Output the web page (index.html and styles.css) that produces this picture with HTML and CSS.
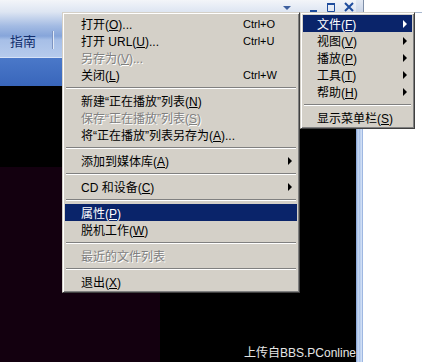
FILE: index.html
```html
<!DOCTYPE html>
<html lang="zh-CN">
<head>
    <meta charset="UTF-8">
    <title>Windows Media Player 菜单</title>
    <link rel="stylesheet" href="styles.css">
</head>
<body>

    <div class="app">
        <!-- Ventana del reproductor -->
        <div class="player">
            <div class="topbar">
                <div class="titlebar">
                    <span class="ctl ctl-drop">
                        <svg width="14" height="12" viewBox="0 0 14 12"><path d="M3 5h8l-4 4z" fill="#3d5f9e"/></svg>
                    </span>
                    <span class="ctl">
                        <svg width="14" height="12" viewBox="0 0 14 12"><rect x="4" y="9" width="7" height="2" fill="#1f4c9c"/></svg>
                    </span>
                    <span class="ctl">
                        <svg width="14" height="12" viewBox="0 0 14 12"><path d="M3.5 2.5h7v8h-7z" fill="none" stroke="#1f4c9c" stroke-width="1"/><rect x="3" y="2" width="8" height="2" fill="#1f4c9c"/></svg>
                    </span>
                    <span class="ctl">
                        <svg width="14" height="12" viewBox="0 0 14 12"><path d="M3 2l8 8M11 2l-8 8" stroke="#1f4c9c" stroke-width="2"/></svg>
                    </span>
                </div>
                <div class="tabs">
                    <span class="tab">指南</span>
                    <span class="tab-sep"></span>
                </div>
                <div class="topbar-lower"></div>
            </div>
            <div class="screen">
                <div class="visual"></div>
                <div class="watermark">上传自BBS.PConline</div>
            </div>
        </div>
        <div class="divider"></div>
        <div class="side">
            <div class="search"></div>
        </div>

        <!-- Menú principal -->
        <div class="menu main-menu">
            <div class="item"><span class="label">打开(<u>O</u>)...</span><span class="key">Ctrl+O</span></div>
            <div class="item"><span class="label">打开 URL(<u>U</u>)...</span><span class="key">Ctrl+U</span></div>
            <div class="item disabled"><span class="label">另存为(<u>V</u>)...</span></div>
            <div class="item"><span class="label">关闭(<u>L</u>)</span><span class="key">Ctrl+W</span></div>
            <div class="sep"></div>
            <div class="item"><span class="label">新建“正在播放”列表(<u>N</u>)</span></div>
            <div class="item disabled"><span class="label">保存“正在播放”列表(<u>S</u>)</span></div>
            <div class="item"><span class="label">将“正在播放”列表另存为(<u>A</u>)...</span></div>
            <div class="sep"></div>
            <div class="item"><span class="label">添加到媒体库(<u>A</u>)</span><span class="arrow"></span></div>
            <div class="sep"></div>
            <div class="item"><span class="label">CD 和设备(<u>C</u>)</span><span class="arrow"></span></div>
            <div class="sep"></div>
            <div class="item active"><span class="label">属性(<u>P</u>)</span></div>
            <div class="item"><span class="label">脱机工作(<u>W</u>)</span></div>
            <div class="sep"></div>
            <div class="item disabled"><span class="label">最近的文件列表</span></div>
            <div class="sep"></div>
            <div class="item"><span class="label">退出(<u>X</u>)</span></div>
        </div>

        <!-- Submenú -->
        <div class="menu sub-menu">
            <div class="item active"><span class="label">文件(<u>F</u>)</span><span class="arrow"></span></div>
            <div class="item"><span class="label">视图(<u>V</u>)</span><span class="arrow"></span></div>
            <div class="item"><span class="label">播放(<u>P</u>)</span><span class="arrow"></span></div>
            <div class="item"><span class="label">工具(<u>T</u>)</span><span class="arrow"></span></div>
            <div class="item"><span class="label">帮助(<u>H</u>)</span><span class="arrow"></span></div>
            <div class="sep"></div>
            <div class="item"><span class="label">显示菜单栏(<u>S</u>)</span></div>
        </div>
    </div>

</body>
</html>
```

FILE: styles.css
```css
/* Estilo general */
body {
    margin: 0;
    font-family: "Liberation Sans", "Noto Sans CJK SC", sans-serif;
    font-size: 12px;
    background-color: #000;
}

.app {
    position: relative;
    display: grid;
    grid-template-columns: 356px 7px 1fr;
    width: 422px;
    height: 362px;
    overflow: hidden;
}

.player {
    display: flex;
    flex-direction: column;
}

/* Barra superior azul */
.topbar {
    height: 86px;
    display: flex;
    flex-direction: column;
    background: linear-gradient(to bottom, #f3f5f9 0, #dde5f2 12px, #a3bbe3 26px, #86a5da 36px, #a7bfe7 40px, #b5caec 56px);
}

.titlebar {
    height: 14px;
    display: flex;
    justify-content: flex-end;
    align-items: center;
    gap: 4px;
}

.ctl {
    width: 14px;
    height: 12px;
    display: flex;
}

.ctl-drop {
    margin-right: 8px;
}

.tabs {
    height: 43px;
    display: flex;
    align-items: center;
    padding-top: 9px;
    box-sizing: border-box;
}

.tab {
    padding-left: 10px;
    font-size: 13px;
    color: #132e6c;
}

.tab-sep {
    width: 1px;
    height: 18px;
    margin-left: 16px;
    background-color: #7d94c2;
    box-shadow: 1px 0 #e2eaf6;
}

.topbar-lower {
    flex: 1;
    border-top: 1px solid #d6e2f7;
    background: linear-gradient(to bottom, #4a78c9, #3966bb);
}

/* Zona de video */
.screen {
    flex: 1;
    position: relative;
    display: grid;
    grid-template-rows: 81px 1fr;
    grid-template-columns: 160px 1fr;
    background-color: #000;
    overflow: hidden;
}

.visual {
    grid-row: 2;
    grid-column: 1;
    background-color: #13000f;
}

.watermark {
    position: absolute;
    left: 244px;
    bottom: 2px;
    white-space: nowrap;
    font-size: 12px;
    line-height: 14px;
    color: #e6e6e6;
}

.divider {
    background:
        linear-gradient(#e3e9f3, #c9d4e7) top / 100% 13px no-repeat,
        linear-gradient(to right, #7b9bd3, #c9daf3 30%, #a6bfe8 55%, #dce8f9 75%, #86a4d8);
}

.side {
    background-color: #fff;
}

.search {
    height: 12px;
    border-left: 1px solid #7f8fa8;
    border-bottom: 1px solid #a9b8cf;
}

/* Menús estilo Windows clásico */
.menu {
    position: absolute;
    background-color: #d4d0c8;
    border: 1px solid;
    border-color: #d4d0c8 #404040 #404040 #d4d0c8;
    box-shadow: inset 1px 1px #fff, inset -1px -1px #808080;
    padding: 2px;
}

.main-menu {
    left: 62px;
    top: 12px;
    width: 232px;
}

.sub-menu {
    left: 300px;
    top: 12px;
    width: 109px;
}

.item {
    display: grid;
    align-items: center;
    height: 17px;
    padding-left: 16px;
    color: #000;
    white-space: nowrap;
}

.main-menu .item {
    grid-template-columns: 1fr 40px 14px;
}

.sub-menu .item {
    grid-template-columns: 1fr 14px;
    padding-left: 14px;
}

.item u {
    text-underline-offset: 1px;
}

.key {
    font-size: 11px;
}

.arrow {
    grid-column: -2;
    display: flex;
    justify-content: center;
}

.arrow::before {
    content: "";
    border-left: 4px solid #000;
    border-top: 4px solid transparent;
    border-bottom: 4px solid transparent;
}

.item.active {
    background-color: #0a246a;
    color: #fff;
}

.item.active .arrow::before {
    border-left-color: #fff;
}

.item.disabled {
    color: #808080;
    text-shadow: 1px 1px #fff;
}

.sep {
    height: 9px;
    display: flex;
    align-items: center;
    padding: 0 1px;
}

.sep::before {
    content: "";
    flex: 1;
    border-top: 1px solid #808080;
    border-bottom: 1px solid #fff;
}
```
